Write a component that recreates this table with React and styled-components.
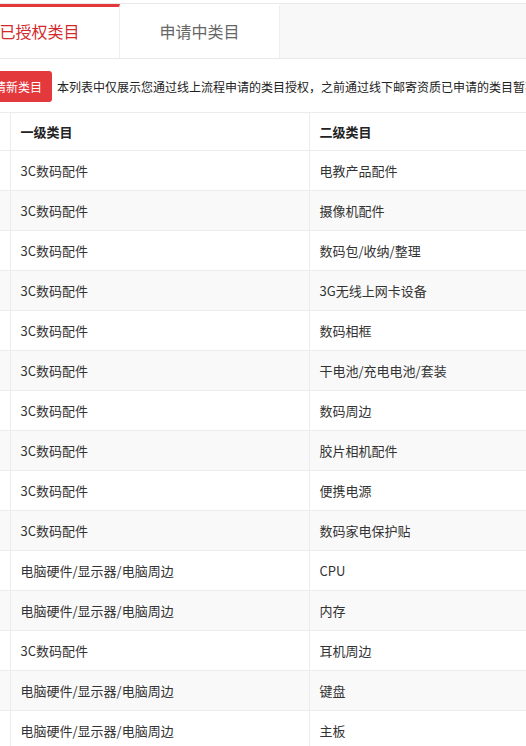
import React from 'react';
import styled, { createGlobalStyle } from 'styled-components';

const GlobalStyle = createGlobalStyle`
  html, body {
    margin: 0;
    overflow: hidden;
    background: #fff;
  }
  body {
    font-family: "Noto Sans CJK SC", "Liberation Sans", sans-serif;
    color: #333;
  }
`;

const RED = '#e4393c';

/* the screenshot is cut on the left, so the page starts off-screen */
const Page = styled.div`
  margin-left: -40px;
  padding-top: 3px;
  width: 700px;
`;

const TabBar = styled.div`
  display: flex;
  height: 54px;
  background: #f8f8f8;
  border-top: 1px solid #e9e9e9;
  border-bottom: 1px solid #e9e9e9;
`;

const Tab = styled.div`
  width: 160px;
  box-sizing: border-box;
  background: #fff;
  border-right: 1px solid #eee;
  border-top: 3px solid ${({ active }) => (active ? RED : '#fff')};
  display: flex;
  align-items: center;
  justify-content: center;
  font-size: 16px;
  color: ${({ active }) => (active ? '#d3282c' : '#666')};
  padding-bottom: 3px;
`;

const Notice = styled.div`
  display: flex;
  align-items: center;
  gap: 5px;
  margin-top: 12px;
  padding-left: 12px;
  white-space: nowrap;
`;

const Button = styled.div`
  height: 31px;
  padding: 0 10px;
  border-radius: 3px;
  background: ${RED};
  color: #fff;
  font-size: 12px;
  display: flex;
  align-items: center;
`;

const NoticeText = styled.span`
  font-size: 12px;
  color: #222;
`;

const Table = styled.table`
  margin-top: 10px;
  border-collapse: collapse;
  table-layout: fixed;
  width: 648px;
  font-size: 13px;
  border-top: 1px solid #ececec;
`;

const Row = styled.tr`
  height: ${({ head }) => (head ? 38 : 40)}px;
  background: ${({ striped }) => (striped ? '#f9f9f9' : '#fff')};
  border-bottom: 1px solid #ececec;
`;

const Cell = styled.td`
  padding: 0 0 0 10px;
  border-right: 1px solid #ececec;
  color: #333;
  white-space: nowrap;
  vertical-align: middle;
`;

const HeadCell = styled(Cell).attrs({ as: 'th' })`
  text-align: left;
  font-weight: bold;
  color: #222;
`;

const rows = [
  ['3C数码配件', '电教产品配件'],
  ['3C数码配件', '摄像机配件'],
  ['3C数码配件', '数码包/收纳/整理'],
  ['3C数码配件', '3G无线上网卡设备'],
  ['3C数码配件', '数码相框'],
  ['3C数码配件', '干电池/充电电池/套装'],
  ['3C数码配件', '数码周边'],
  ['3C数码配件', '胶片相机配件'],
  ['3C数码配件', '便携电源'],
  ['3C数码配件', '数码家电保护贴'],
  ['电脑硬件/显示器/电脑周边', 'CPU'],
  ['电脑硬件/显示器/电脑周边', '内存'],
  ['3C数码配件', '耳机周边'],
  ['电脑硬件/显示器/电脑周边', '键盘'],
  ['电脑硬件/显示器/电脑周边', '主板'],
];

export default function App() {
  return (
    <>
      <GlobalStyle />
      <Page>
        <TabBar>
          <Tab active>已授权类目</Tab>
          <Tab>申请中类目</Tab>
        </TabBar>
        <Notice>
          <Button>申请新类目</Button>
          <NoticeText>
            本列表中仅展示您通过线上流程申请的类目授权，之前通过线下邮寄资质已申请的类目暂不在此展示
          </NoticeText>
        </Notice>
        <Table>
          <colgroup>
            <col style={{ width: 50 }} />
            <col style={{ width: 299 }} />
            <col style={{ width: 299 }} />
          </colgroup>
          <thead>
            <Row head>
              <HeadCell />
              <HeadCell>一级类目</HeadCell>
              <HeadCell>二级类目</HeadCell>
            </Row>
          </thead>
          <tbody>
            {rows.map(([a, b], i) => (
              <Row key={i} striped={i % 2 === 1}>
                <Cell />
                <Cell>{a}</Cell>
                <Cell>{b}</Cell>
              </Row>
            ))}
          </tbody>
        </Table>
      </Page>
    </>
  );
}
